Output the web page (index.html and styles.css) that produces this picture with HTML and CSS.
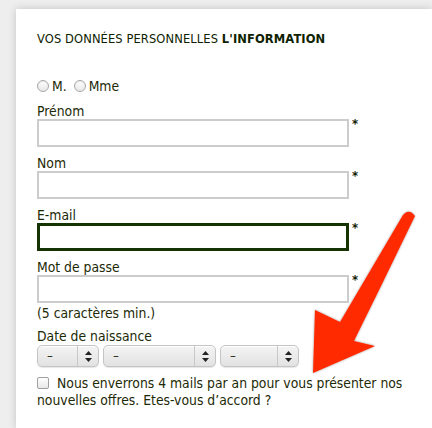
FILE: index.html
```html
<!DOCTYPE html>
<html lang="fr">
<head>
<meta charset="utf-8">
<title>Vos données personnelles</title>
<link rel="stylesheet" href="styles.css">
</head>
<body>
<div class="panel">
  <h2 class="title">VOS DONNÉES PERSONNELLES <b>L'INFORMATION</b></h2>
  <div class="civ">
    <span class="radio"></span><span class="civ-label">M.</span>
    <span class="radio"></span><span class="civ-label">Mme</span>
  </div>
  <div class="field">
    <label class="lbl">Prénom</label>
    <div class="row"><span class="input"></span><span class="req">*</span></div>
  </div>
  <div class="field">
    <label class="lbl">Nom</label>
    <div class="row"><span class="input"></span><span class="req">*</span></div>
  </div>
  <div class="field">
    <label class="lbl">E-mail</label>
    <div class="row"><span class="input focus"></span><span class="req">*</span></div>
  </div>
  <div class="field last">
    <label class="lbl">Mot de passe</label>
    <div class="row"><span class="input"></span><span class="req">*</span></div>
  </div>
  <div class="hint">(5 caractères min.)</div>
  <div class="lbl date-lbl">Date de naissance</div>
  <div class="selects">
    <div class="select s1"><span class="val">–</span><span class="arr"><svg width="7" height="11" viewBox="0 0 7 11"><path d="M3.5 0L7 4H0z M3.5 11L0 7h7z" fill="#222"/></svg></span></div>
    <div class="select s2"><span class="val">–</span><span class="arr"><svg width="7" height="11" viewBox="0 0 7 11"><path d="M3.5 0L7 4H0z M3.5 11L0 7h7z" fill="#222"/></svg></span></div>
    <div class="select s3"><span class="val">–</span><span class="arr"><svg width="7" height="11" viewBox="0 0 7 11"><path d="M3.5 0L7 4H0z M3.5 11L0 7h7z" fill="#222"/></svg></span></div>
  </div>
  <p class="optin"><span class="check"></span>Nous enverrons 4 mails par an pour vous présenter nos nouvelles offres. Etes-vous d’accord ?</p>
  <svg class="arrow" width="432" height="428" viewBox="0 0 432 428">
    <defs>
      <filter id="sh" x="-10%" y="-10%" width="120%" height="120%">
        <feDropShadow dx="0" dy="0" stdDeviation="0.8" flood-color="#000" flood-opacity="0.45"/>
      </filter>
    </defs>
    <path d="M403 215 Q409 208 415 216 L383 282 L354 341 L375 346 L313 373 L315 310 L340 322 Z" fill="#ff2a00" filter="url(#sh)"/>
  </svg>
</div>
</body>
</html>
```
FILE: styles.css
```css
html, body {
  margin: 0;
  padding: 0;
}
body {
  background: #eeeeee;
  font-family: "DejaVu Sans Condensed", "DejaVu Sans", sans-serif;
  color: #1d2a06;
  width: 432px;
  height: 428px;
  overflow: hidden;
}
.panel {
  margin: 9px 0 0 16px;
  background: #fff;
  box-shadow: 0 0 8px rgba(0, 0, 0, 0.18);
  padding: 23px 0 0 21px;
  height: 419px;
  box-sizing: border-box;
}
.title {
  margin: 0;
  font-family: "DejaVu Sans", sans-serif;
  font-size: 11.5px;
  line-height: 14px;
  letter-spacing: 0.1px;
  font-weight: normal;
  color: #0e2200;
}
.title b {
  font-weight: bold;
}
.civ {
  margin-top: 32px;
  display: flex;
  align-items: center;
  font-size: 13.8px;
  line-height: 16px;
}
.radio {
  width: 10px;
  height: 10px;
  border-radius: 50%;
  border: 1px solid #a8a8a8;
  background: linear-gradient(#fdfdfd, #e8e8e8);
  box-shadow: inset 0 1px 1px rgba(0,0,0,0.08);
  margin-right: 3px;
}
.civ-label {
  margin-right: 7px;
}
.field {
  margin-top: 9px;
}
.field + .field {
  margin-top: 8px;
}
.lbl {
  display: block;
  font-size: 13.8px;
  line-height: 16px;
}
.row {
  display: flex;
  align-items: flex-start;
}
.input {
  display: block;
  width: 312px;
  height: 28px;
  box-sizing: border-box;
  border: 2px solid #cccccc;
  background: #fff;
}
.input.focus {
  border: 3px solid #153300;
}
.req {
  margin-left: 3px;
  font-weight: bold;
  font-size: 13px;
  line-height: 9px;
  color: #0e2200;
}
.hint {
  font-size: 13.8px;
  line-height: 16px;
  margin-top: 2px;
}
.date-lbl {
  margin-top: 7px;
}
.selects {
  display: flex;
  gap: 4px;
  margin-top: 1px;
}
.select {
  display: flex;
  height: 22px;
  box-sizing: border-box;
  border-radius: 5px;
  border: 1px solid #c4c4c4;
  background: linear-gradient(#f4f4f4, #e2e2e2);
  box-shadow: inset 0 1px 0 #fff, 0 1px 1px rgba(0,0,0,0.1);
  font-size: 13px;
  line-height: 20px;
}
.s1 { width: 62px; }
.s2 { width: 113px; }
.s3 { width: 79px; }
.select .val {
  flex: 1;
  padding-left: 9px;
}
.select .arr {
  width: 20px;
  border-left: 1px solid #c8c8c8;
  display: flex;
  align-items: center;
  justify-content: center;
}
.optin {
  margin: 8px 0 0;
  font-size: 13.8px;
  line-height: 17px;
  width: 380px;
}
.check {
  display: inline-block;
  width: 10px;
  height: 10px;
  border: 1px solid #a0a0a0;
  border-radius: 2px;
  background: linear-gradient(#fff, #e8e8e8);
  vertical-align: -1px;
  margin-right: 8px;
}
.arrow {
  position: absolute;
  left: 0;
  top: 0;
  pointer-events: none;
}
```
